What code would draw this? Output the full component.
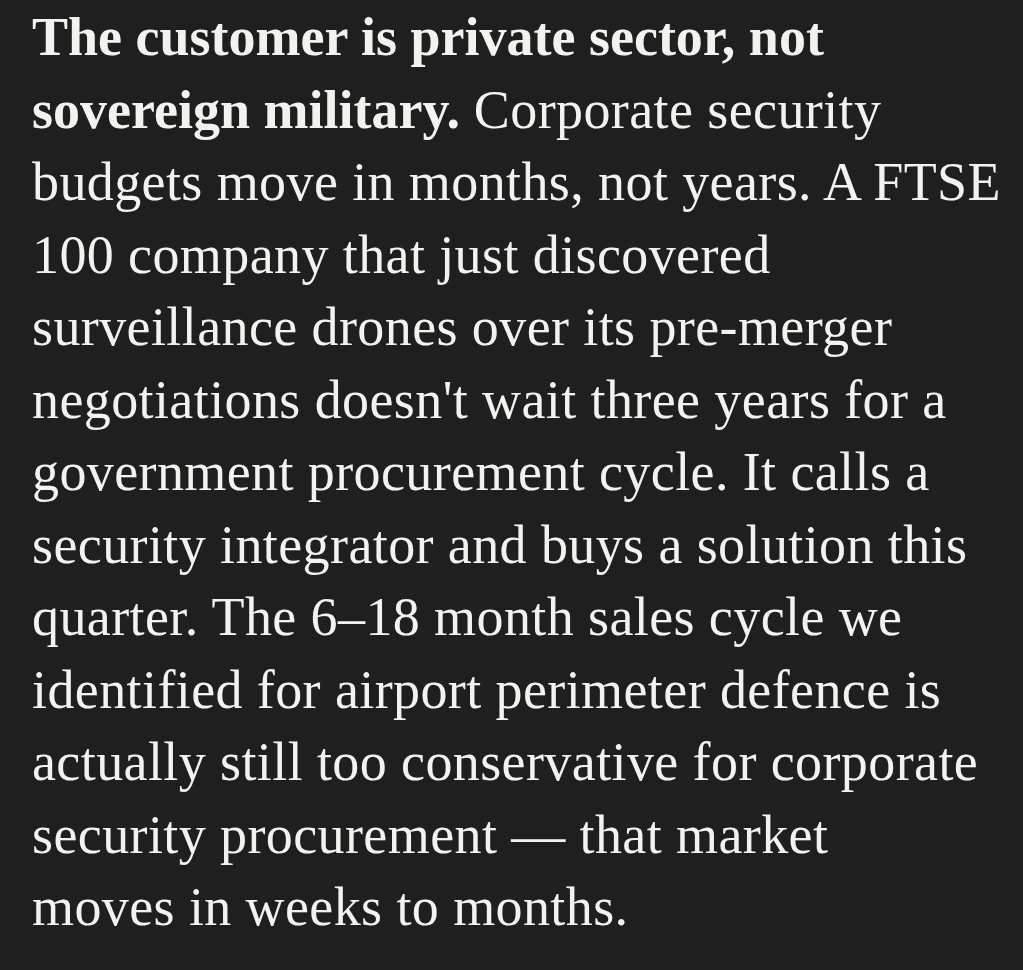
const lines: { bold?: string; text: string }[] = [
  { bold: "The customer is private sector, not", text: "" },
  { bold: "sovereign military.", text: " Corporate security" },
  { text: "budgets move in months, not years. A FTSE" },
  { text: "100 company that just discovered" },
  { text: "surveillance drones over its pre-merger" },
  { text: "negotiations doesn't wait three years for a" },
  { text: "government procurement cycle. It calls a" },
  { text: "security integrator and buys a solution this" },
  { text: "quarter. The 6–18 month sales cycle we" },
  { text: "identified for airport perimeter defence is" },
  { text: "actually still too conservative for corporate" },
  { text: "security procurement — that market" },
  { text: "moves in weeks to months." },
];

export default function App() {
  return (
    <div className="min-h-[970px] w-full bg-[#1f1f1f] px-[32px] pt-[1px] text-[#f3f2ee] font-['Liberation_Serif',serif]">
      <p className="text-[54px] leading-[72.5px] tracking-[0.4px]">
        {lines.map((l, i) => (
          <span key={i} className="block whitespace-nowrap">
            {l.bold && <strong className="font-bold tracking-normal">{l.bold}</strong>}
            {l.text}
          </span>
        ))}
      </p>
    </div>
  );
}
